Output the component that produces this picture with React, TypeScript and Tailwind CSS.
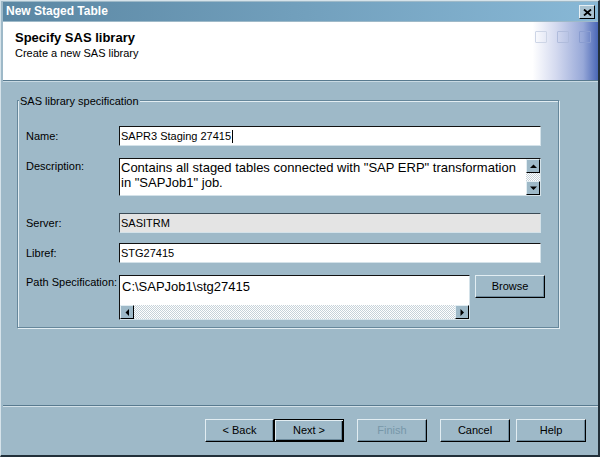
import React from "react";

const btn =
  "flex items-center justify-center h-[23px] bg-[#9eb9c8] border border-t-[#e2edf2] border-l-[#e2edf2] border-r-black border-b-black shadow-[inset_-1px_-1px_0_#6c899b] text-[11px]";

const sbtn =
  "flex items-center justify-center w-[14px] h-[14px] bg-[#9eb9c8] border border-t-[#e2edf2] border-l-[#e2edf2] border-r-black border-b-black shrink-0";

const sunken =
  "border border-t-[#111111] border-l-[#111111] border-r-[#d4e2e9] border-b-[#d4e2e9]";

const track =
  "bg-white bg-[image:repeating-conic-gradient(#c6d2d9_0%_25%,#ffffff_0%_50%)] bg-[length:2px_2px]";

function Tri({ dir }: { dir: "up" | "down" | "left" | "right" }) {
  const pts =
    dir === "up"
      ? "0,4 7,4 3.5,0.5"
      : dir === "down"
      ? "0,0.5 7,0.5 3.5,4"
      : dir === "left"
      ? "4,0 4,7 0.5,3.5"
      : "0.5,0 0.5,7 4,3.5";
  const w = dir === "up" || dir === "down" ? 7 : 5;
  const h = dir === "up" || dir === "down" ? 5 : 7;
  return (
    <svg width={w} height={h} viewBox={`0 0 ${w} ${h}`}>
      <polygon points={pts} fill="#000" />
    </svg>
  );
}

export default function App() {
  return (
    <div className="w-[600px] h-[457px] flex flex-col bg-[#9eb9c8] border-l border-t border-l-[#d6e3ea] border-t-[#d6e3ea] border-r-2 border-b-2 border-r-[#22303a] border-b-[#22303a] pl-[2px] pt-[1px] font-['Liberation_Sans',Arial,sans-serif] text-[11px] text-black overflow-hidden">
      {/* Title bar */}
      <div className="h-[19px] mb-[1px] shrink-0 flex items-start justify-between pl-[3px] pr-[3px] bg-[image:linear-gradient(to_right,#5b87a3,#88b8d6)]">
        <span className="text-white font-bold text-[12px] leading-[19px]">New Staged Table</span>
        <div className="mt-[3px] w-[16px] h-[14px] flex items-center justify-center bg-[#a9c2d0] border border-t-[#e6eff4] border-l-[#e6eff4] border-r-black border-b-black">
          <svg width="9" height="7" viewBox="0 0 9 7">
            <path d="M1 0.5 L8 6.5 M8 0.5 L1 6.5" stroke="#000" strokeWidth="1.8" />
          </svg>
        </div>
      </div>

      {/* Header */}
      <div className="h-[59px] shrink-0 flex justify-between border-b border-b-[#587a8f] bg-white bg-[image:linear-gradient(to_right,#ffffff_89%,#d3d9ef_93%,#97a8d8_97.5%,#4a67b6_100%)]">
        <div className="pl-[12px] pt-[8px]">
          <div className="font-bold text-[13px] leading-[16px]">Specify SAS library</div>
          <div className="text-[11px] leading-[14px]">Create a new SAS library</div>
        </div>
        <div className="flex gap-[10px] mt-[9px] mr-[7px] self-start">
          <div className="w-[12px] h-[12px] border border-[#cdd5e6] rounded-[1px]" />
          <div className="w-[12px] h-[12px] border border-[#b0bcdc] rounded-[1px]" />
          <div className="w-[12px] h-[12px] border border-[#8a9dd0] rounded-[1px]" />
        </div>
      </div>

      {/* Body */}
      <div className="flex-1 flex flex-col border-t border-t-[#c9dae3]">
        <div className="relative mt-[18px] ml-[14px] w-[542px] h-[228px] border border-[#66879b] shadow-[inset_1px_1px_0_#e2edf2,1px_1px_0_#e2edf2] pl-[8px] pt-[25px]">
          <span className="absolute left-[1px] -top-[6px] px-[1px] leading-[13px] bg-[#9eb9c8]">
            SAS library specification
          </span>

          {/* Name */}
          <div className="flex">
            <div className="w-[93px] h-[20px] leading-[20px]">Name:</div>
            <div className={`w-[422px] h-[20px] bg-white ${sunken} pl-[1px] leading-[18px] flex items-center whitespace-nowrap`}>
              SAPR3 Staging 27415
              <span className="inline-block w-px h-[13px] bg-black ml-[1px]" />
            </div>
          </div>

          {/* Description */}
          <div className="flex mt-[12px]">
            <div className="w-[93px] pt-[1px] leading-[14px]">Description:</div>
            <div className={`w-[422px] h-[38px] bg-white ${sunken} flex`}>
              <div className="flex-1 pl-[1px] pt-[1px] text-[13px] leading-[15px] whitespace-nowrap overflow-hidden">
                Contains all staged tables connected with "SAP ERP" transformation
                <br />
                in "SAPJob1" job.
              </div>
              <div className="w-[14px] flex flex-col">
                <div className={sbtn}>
                  <Tri dir="up" />
                </div>
                <div className={`flex-1 ${track}`} />
                <div className={sbtn}>
                  <Tri dir="down" />
                </div>
              </div>
            </div>
          </div>

          {/* Server */}
          <div className="flex mt-[17px]">
            <div className="w-[93px] h-[20px] leading-[20px]">Server:</div>
            <div className="w-[422px] h-[20px] bg-[#e4e4e4] border border-t-[#3b4b56] border-l-[#3b4b56] border-r-[#d4e2e9] border-b-[#d4e2e9] pl-[1px] leading-[18px]">
              SASITRM
            </div>
          </div>

          {/* Libref */}
          <div className="flex mt-[10px]">
            <div className="w-[93px] h-[20px] leading-[20px]">Libref:</div>
            <div className={`w-[422px] h-[20px] bg-white ${sunken} pl-[1px] leading-[18px]`}>
              STG27415
            </div>
          </div>

          {/* Path */}
          <div className="flex mt-[12px] items-start">
            <div className="w-[93px] leading-[14px]">Path Specification:</div>
            <div className={`w-[351px] h-[45px] bg-white ${sunken} flex flex-col`}>
              <div className="flex-1 pl-[2px] pt-[3px] text-[13px] leading-[15px] whitespace-nowrap">
                C:\SAPJob1\stg27415
              </div>
              <div className="h-[14px] flex">
                <div className={sbtn}>
                  <Tri dir="left" />
                </div>
                <div className={`flex-1 ${track}`} />
                <div className={sbtn}>
                  <Tri dir="right" />
                </div>
              </div>
            </div>
            <div className={`${btn} ml-[5px] w-[70px] text-black`}>Browse</div>
          </div>
        </div>
        <div className="flex-1" />
      </div>

      {/* Footer */}
      <div className="h-[50px] shrink-0 border-t border-t-[#587a8f] shadow-[inset_0_1px_0_#d3e1e8] flex justify-end items-start pt-[13px] pr-[12px]">
        <div className={`${btn} w-[69px] text-black`}>&lt; Back</div>
        <div className="w-[70px] h-[23px] flex items-center justify-center bg-[#9eb9c8] border border-black shadow-[inset_1px_1px_0_#e2edf2,inset_-1px_-1px_0_#000000,inset_-2px_-2px_0_#6c899b] text-[11px] text-black">
          Next &gt;
        </div>
        <div className={`${btn} w-[70px] ml-[13px] text-[#7797a9]`}>Finish</div>
        <div className={`${btn} w-[70px] ml-[13px] text-black`}>Cancel</div>
        <div className={`${btn} w-[70px] ml-[6px] text-black`}>Help</div>
      </div>
    </div>
  );
}
